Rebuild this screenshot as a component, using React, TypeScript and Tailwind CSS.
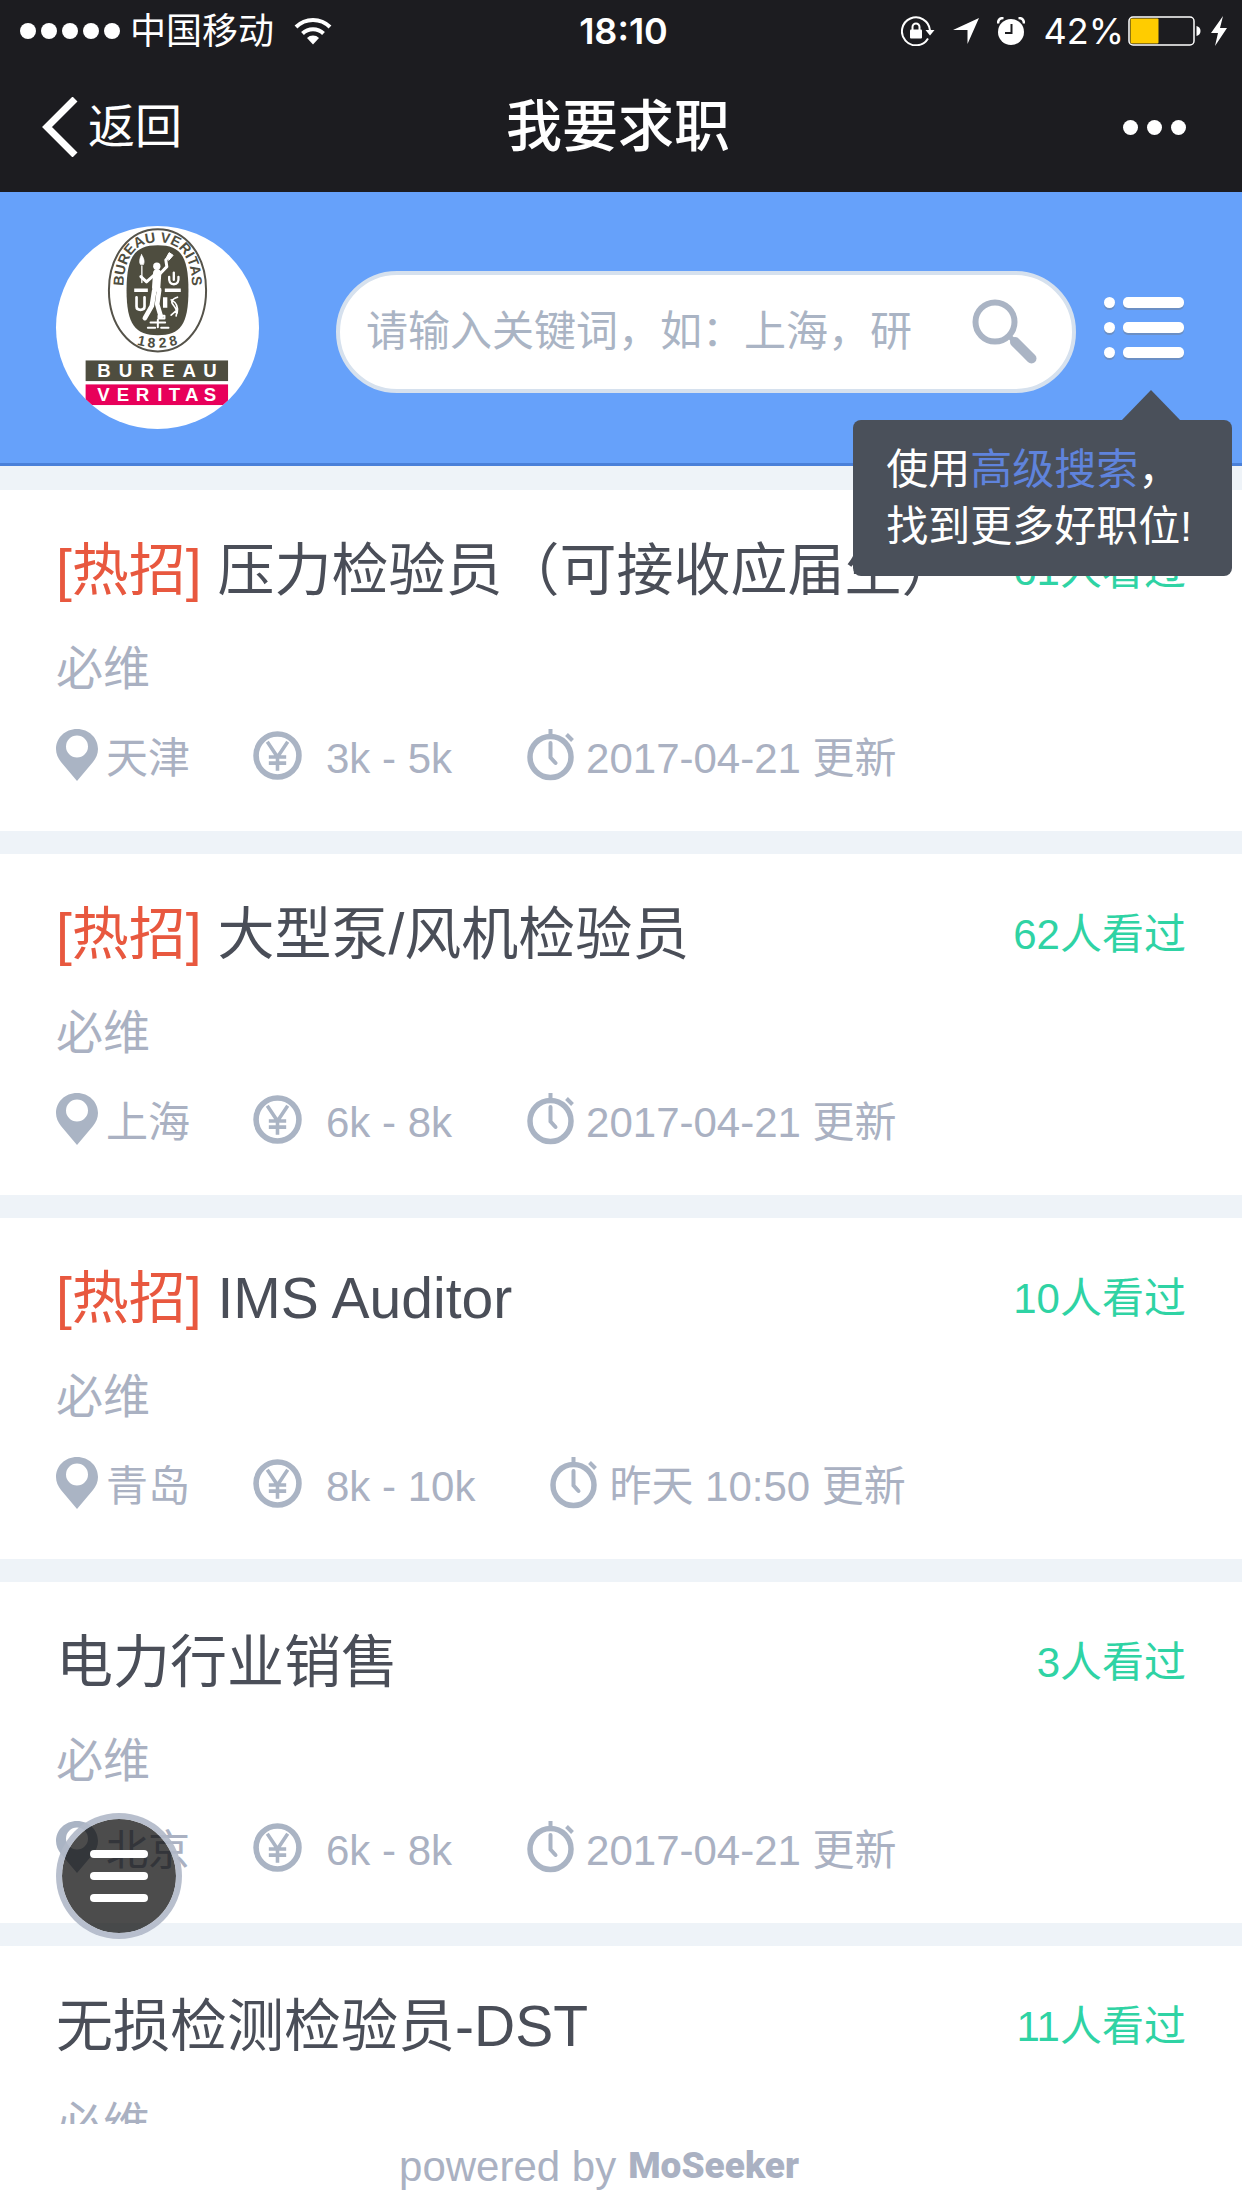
/**
 * JobListPage — 职位列表页
 *
 * 状态栏 / 导航栏 / 搜索头部 / 职位卡片 / 底部署名 / 悬浮菜单
 */

import React, { useState } from 'react';

// -------------------------------------------------------------------------
// 类型与数据
// -------------------------------------------------------------------------

interface Job {
  id: number;
  title: string;
  hot: boolean;
  company: string;
  city: string;
  salary: string;
  updated: string;
  views: number;
}

const JOBS: Job[] = [
  { id: 1, title: '压力检验员（可接收应届生）', hot: true, company: '必维', city: '天津', salary: '3k - 5k', updated: '2017-04-21', views: 61 },
  { id: 2, title: '大型泵/风机检验员', hot: true, company: '必维', city: '上海', salary: '6k - 8k', updated: '2017-04-21', views: 62 },
  { id: 3, title: 'IMS Auditor', hot: true, company: '必维', city: '青岛', salary: '8k - 10k', updated: '昨天 10:50', views: 10 },
  { id: 4, title: '电力行业销售', hot: false, company: '必维', city: '北京', salary: '6k - 8k', updated: '2017-04-21', views: 3 },
  { id: 5, title: '无损检测检验员-DST', hot: false, company: '必维', city: '上海', salary: '6k - 8k', updated: '2017-04-21', views: 11 },
];

/** 标志下方两条色带里的字母：[字母, 中心 x] */
const BUREAU: [string, number][] = [['B', 222], ['U', 287], ['R', 352], ['E', 416], ['A', 478], ['U', 541]];
const VERITAS: [string, number][] = [['V', 221], ['E', 279], ['R', 338], ['I', 390], ['T', 434], ['A', 486], ['S', 541]];

/** 徽章底部年份：[数字, x, y, 旋转角] */
const YEAR: [string, number, number, number][] = [['1', 332, 469, 12], ['8', 364, 475, 4], ['2', 399, 475, -4], ['8', 433, 469, -12]];

// -------------------------------------------------------------------------
// 图标
// -------------------------------------------------------------------------

const WifiIcon = () => (
  <svg className="w-[38px] h-7" viewBox="0 0 38 28" fill="none" stroke="#fff" strokeWidth="4">
    <path d="M2 10a24 24 0 0 1 34 0" />
    <path d="M8.500 16.500a15 15 0 0 1 21 0" />
    <path d="M19 27.500l-6-6.500a8.500 8.500 0 0 1 12 0z" fill="#fff" stroke="none" />
  </svg>
);

const RotationLockIcon = () => (
  <svg className="w-[34px] h-[30px]" viewBox="0 0 34 30" fill="none" stroke="#fff" strokeWidth="2">
    <path d="M27 22.500A14 14 0 1 1 28.900 14" />
    <path d="M24.500 14h9l-4.500 5.500z" fill="#fff" stroke="none" />
    <rect x="9" y="13.500" width="12" height="9" rx="1" fill="#fff" stroke="none" />
    <path d="M11.500 14v-3a3.500 3.500 0 0 1 7 0v3" />
  </svg>
);

const LocationArrowIcon = () => (
  <svg className="w-[26px] h-[26px]" viewBox="0 0 26 26" fill="#fff">
    <path d="M26 0L14.500 26V12H0z" />
  </svg>
);

const AlarmIcon = () => (
  <svg className="w-7 h-7" viewBox="0 0 28 28">
    <circle cx="14" cy="15" r="13" fill="#fff" />
    <path d="M1 6.500Q1 1 6.500 1M27 6.500Q27 1 21.500 1" stroke="#fff" strokeWidth="2.500" fill="none" />
    <path d="M14.500 7v9H8" stroke="#1c1c20" strokeWidth="2" fill="none" />
  </svg>
);

const BatteryIcon = () => (
  <svg className="w-[73px] h-[30px]" viewBox="0 0 73 30">
    <rect x="1" y="1" width="65" height="28" rx="4" fill="none" stroke="#fff" strokeWidth="1.500" />
    <rect x="2.500" y="2.500" width="28" height="25" rx="1" fill="#ffcc00" />
    <path d="M68.500 10q4 1 4 5t-4 5z" fill="#fff" />
  </svg>
);

const BoltIcon = () => (
  <svg className="w-4 h-[30px]" viewBox="0 0 16 30" fill="#fff">
    <path d="M12 0L0 17h7L4 30 16 12H9z" />
  </svg>
);

const SearchIcon = () => (
  <svg className="w-[66px] h-[66px]" viewBox="0 0 66 66" fill="none" stroke="#aab4c4">
    <circle cx="23" cy="23" r="19.500" strokeWidth="6" />
    <path d="M37 37l5 5" strokeWidth="5" />
    <path d="M43 43l16.500 16.500" strokeWidth="10" strokeLinecap="round" />
  </svg>
);

const ListIcon = () => (
  <svg className="w-20 h-[66px]" viewBox="0 0 80 66">
    {[2, 27, 52].map((y) => (
      <g key={y}>
        <rect x="0" y={y + 2} width="11" height="11" rx="5.500" fill="#6b8fc4" />
        <rect x="19" y={y + 2} width="61" height="11" rx="5" fill="#6b8fc4" />
        <rect x="0" y={y} width="11" height="11" rx="5.500" fill="#fff" />
        <rect x="19" y={y} width="61" height="11" rx="5" fill="#fff" />
      </g>
    ))}
  </svg>
);

const PinIcon = () => (
  <svg className="w-[42px] h-[52px]" viewBox="0 0 42 52">
    <path
      d="M21 0C9 0 0 9 0 20c0 5 2 9 5 13l16 19 16-19c3-4 5-8 5-13C42 9 33 0 21 0zm0 6.500a11 11 0 1 1 0 22 11 11 0 0 1 0-22z"
      fill="#aab4c4"
      fillRule="evenodd"
    />
  </svg>
);

const YenIcon = () => (
  <svg className="w-[49px] h-[49px]" viewBox="0 0 48 48" fill="none" stroke="#aab4c4">
    <circle cx="24" cy="24" r="21" strokeWidth="5.500" />
    <path d="M14 10.500l10 15 10-15M24 25v14M15.500 25.500h17M15.500 31.500h17" strokeWidth="3.500" />
  </svg>
);

const ClockIcon = () => (
  <svg className="w-12 h-[52px]" viewBox="0 0 48 52" fill="none" stroke="#aab4c4">
    <circle cx="23.500" cy="28" r="20.500" strokeWidth="5.500" />
    <path d="M23.500 0v6M39.500 5.500l6 6" strokeWidth="4" />
    <path d="M23.500 14v14.500l5 5.500" strokeWidth="4" strokeLinecap="round" />
  </svg>
);

/** 公司标志 */
const CompanyLogo = () => (
  <svg
    className="w-[203px] h-[203px] rounded-full bg-white"
    viewBox="78 110 610 610"
    fontFamily="Liberation Sans, sans-serif"
    fontWeight="700"
    role="img"
    aria-label="Bureau Veritas"
  >
    <path
      d="M384 120C470 120 529 200 529 303S470 487 384 487 237 406 237 303 298 120 384 120z"
      fill="#fff"
      stroke="#55534a"
      strokeWidth="6"
    />
    <path
      d="M384 168C452 168 476 200 476 303S452 438 384 438 290 406 290 303 316 168 384 168z"
      fill="#4e4d3f"
    />
    <path id="logo-top" d="M281 314C277 205 316 159 384 159S491 205 487 314" fill="none" />
    <text fontSize="43" fill="#4e4d3f" textAnchor="middle">
      <textPath href="#logo-top" startOffset="50%">BUREAU VERITAS</textPath>
    </text>
    <g fontSize="42" fill="#4e4d3f" textAnchor="middle">
      {YEAR.map(([ch, x, y, deg]) => (
        <text key={x} x={x} y={y} transform={`rotate(${deg} ${x} ${y})`}>{ch}</text>
      ))}
    </g>
    {/* 徽章中的人像与器物 */}
    <g stroke="#fff" fill="none" strokeLinecap="round" strokeLinejoin="round">
      <circle cx="381" cy="231" r="11" fill="#fff" stroke="none" />
      <path d="M382 252L379 295" strokeWidth="25" />
      <path d="M372 258L350 278L333 262" strokeWidth="9" />
      <path d="M392 252L411 232L408 212" strokeWidth="9" />
      <path d="M373 305L366 350L345 387" strokeWidth="14" />
      <path d="M388 302L382 345L393 382" strokeWidth="14" />
      <path d="M336 230V280" strokeWidth="4" />
      <path d="M335 196q-10 20-3 30h9q6-12-6-30z" fill="#fff" strokeWidth="2" />
      <path d="M408 208l10-18 12 8-12 14z" fill="#fff" strokeWidth="3" />
      <path d="M313 303H354M405 303H453" strokeWidth="11" strokeLinecap="butt" />
      <path d="M418 263q-2 22 14 22t14-22M432 250v22" strokeWidth="7" />
      <path d="M320 324v28q0 10 12 10t12-10v-28" strokeWidth="8" />
      <path d="M406 324v32" strokeWidth="13" strokeLinecap="butt" />
      <path d="M443 324q-26 8-12 24t8 32M424 332q24 12 18 40M424 378l18-16" strokeWidth="5" />
      <path d="M386 380h18v8h-18zM384 392v22M362 400h44M354 416h22M394 416h22" strokeWidth="6" />
    </g>
    <rect x="167" y="514" width="428" height="62" fill="#4e4d3f" />
    <rect x="167" y="586" width="428" height="62" fill="#e8005a" />
    <g fontSize="56" fill="#fff" textAnchor="middle">
      {BUREAU.map(([ch, x]) => (
        <text key={x} x={x} y="565">{ch}</text>
      ))}
      {VERITAS.map(([ch, x]) => (
        <text key={x} x={x} y="637">{ch}</text>
      ))}
    </g>
  </svg>
);

// -------------------------------------------------------------------------
// 顶部
// -------------------------------------------------------------------------

const StatusBar = () => (
  <div className="grid grid-cols-[1fr_auto_1fr] items-center h-[62px] pl-5 pr-[15px] text-4xl font-['Inter','Noto_Sans_CJK_SC',sans-serif]">
    <div className="flex items-center">
      <div className="flex gap-[5px] mr-[10px]">
        {[0, 1, 2, 3, 4].map((i) => (
          <span key={i} className="size-4 rounded-full bg-white" />
        ))}
      </div>
      <span className="mr-5">中国移动</span>
      <WifiIcon />
    </div>
    <span className="font-semibold">18:10</span>
    <div className="flex items-center justify-end">
      <RotationLockIcon />
      <span className="ml-[18px]"><LocationArrowIcon /></span>
      <span className="ml-[18px]"><AlarmIcon /></span>
      <span className="ml-[18px] mr-1">42%</span>
      <BatteryIcon />
      <span className="ml-[10px]"><BoltIcon /></span>
    </div>
  </div>
);

const NavBar = () => (
  <nav className="grid grid-cols-[1fr_auto_1fr] items-center h-[130px] pl-[42px] pr-14">
    <button className="flex items-center gap-[10px] justify-self-start text-[47px]">
      <svg className="w-9 h-[60px]" viewBox="0 0 36 60" fill="none" stroke="#fff" strokeWidth="7">
        <path d="M33 2L5 30l28 28" />
      </svg>
      返回
    </button>
    <h1 className="pl-2 text-[56px] font-medium">我要求职</h1>
    <button aria-label="更多" className="flex gap-[9px] justify-self-end">
      {[0, 1, 2].map((i) => (
        <span key={i} className="size-[15px] rounded-full bg-white" />
      ))}
    </button>
  </nav>
);

const SearchHeader = () => {
  const [keyword, setKeyword] = useState('');

  return (
    <div className="relative z-10 flex items-center h-[274px] pl-14 pr-[58px] bg-[#66a1fa] border-b-3 border-[#4a80d9]">
      <CompanyLogo />
      <form
        className="flex items-center flex-1 min-w-0 h-[122px] mt-2 ml-[77px] mr-7 pl-[26px] pr-[34px] rounded-full bg-white border-4 border-[#d6e1ee]"
        onSubmit={(e) => e.preventDefault()}
      >
        <input
          type="text"
          aria-label="关键词"
          value={keyword}
          onChange={(e) => setKeyword(e.target.value)}
          placeholder="请输入关键词，如：上海，研"
          className="flex-1 min-w-0 text-[42px] text-[#4a505b] placeholder:text-[#aab4c4] outline-none"
        />
        <button type="submit" aria-label="搜索">
          <SearchIcon />
        </button>
      </form>
      <button aria-label="高级搜索">
        <ListIcon />
      </button>

      {/* 高级搜索提示气泡 */}
      <div className="absolute right-[10px] top-[228px] pl-[33px] pr-10 pt-[21px] pb-[21px] rounded-lg bg-[#4a505a] text-white text-[42px] leading-[57px]">
        <svg className="absolute right-[51px] -top-[30px] w-[60px] h-[31px]" viewBox="0 0 60 31">
          <path d="M30 0L60 31H0z" fill="#4a505a" />
        </svg>
        使用<a href="#advanced" className="text-[#5f83dc]">高级搜索</a>，<br />
        找到更多好职位!
      </div>
    </div>
  );
};

// -------------------------------------------------------------------------
// 职位卡片
// -------------------------------------------------------------------------

const JobCard: React.FC<{ job: Job }> = ({ job }) => (
  <li className="h-[341px] px-14 pt-10 bg-white whitespace-nowrap">
    <div className="flex items-center justify-between h-20">
      <h2 className="text-[57px] leading-[80px] text-[#4a4e58]">
        {job.hot && <span className="text-[#e8583f]">[热招] </span>}
        {job.title}
      </h2>
      <span className="text-[42px] text-[#2fd3a4]">{job.views}人看过</span>
    </div>
    <p className="mt-[27px] text-[47px] leading-[64px] text-[#aab1c2]">{job.company}</p>
    <div className="flex items-start h-14 mt-7 text-[42px] leading-[60px] text-[#aab1c2]">
      <PinIcon />
      <span className="ml-2 mr-[63px]">{job.city}</span>
      <span className="mt-[2px]"><YenIcon /></span>
      <span className="ml-6 mr-[75px]">{job.salary}</span>
      <ClockIcon />
      <span className="ml-[11px]">{job.updated} 更新</span>
    </div>
  </li>
);

// -------------------------------------------------------------------------
// 页面
// -------------------------------------------------------------------------

export default function App() {
  return (
    <div className="relative flex flex-col h-screen overflow-hidden bg-[#eef3f8] font-['Liberation_Sans','Noto_Sans_CJK_SC',sans-serif]">
      <header className="shrink-0">
        <div className="bg-[#1c1c20] text-white">
          <StatusBar />
          <NavBar />
        </div>
        <SearchHeader />
      </header>

      <main className="flex-1 min-h-0 overflow-hidden pt-6">
        <ul className="flex flex-col gap-[23px]">
          {JOBS.map((job) => (
            <JobCard key={job.id} job={job} />
          ))}
        </ul>
      </main>

      <footer className="flex items-center justify-center gap-3 h-[84px] pr-11 shrink-0 bg-white text-[42px] text-[#aab1c2]">
        powered by
        <a href="#moseeker" className="text-[37px] font-black font-['Roboto',sans-serif]">MoSeeker</a>
      </footer>

      {/* 悬浮菜单按钮 */}
      <button
        aria-label="菜单"
        className="absolute left-14 bottom-[269px] z-20 flex flex-col items-center justify-center gap-[14px] size-[126px] rounded-full bg-black/70 bg-clip-padding border-6 border-[#b0b8c8]/90"
      >
        {[0, 1, 2].map((i) => (
          <span key={i} className="w-[58px] h-2 rounded-full bg-white" />
        ))}
      </button>
    </div>
  );
}
